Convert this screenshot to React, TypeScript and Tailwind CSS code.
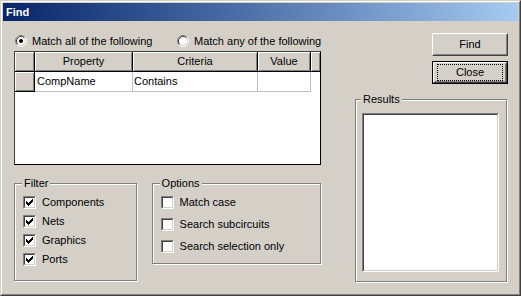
import React from "react";

const raised = "bg-[#d4d0c8] shadow-[inset_1px_1px_0_#fff,inset_-1px_-1px_0_#808080]";
const etched = "border border-[#808080] shadow-[inset_1px_1px_0_#fff,1px_1px_0_#fff]";

const Radio = ({ checked }: { checked?: boolean }) => (
  <svg width="12" height="12" viewBox="0 0 12 12" className="shrink-0">
    <circle cx="6" cy="6" r="4.5" fill="#fff" />
    <path d="M2.11 9.89 A5.5 5.5 0 0 1 9.89 2.11" stroke="#808080" fill="none" />
    <path d="M9.89 2.11 A5.5 5.5 0 0 1 2.11 9.89" stroke="#fff" fill="none" />
    <path d="M2.82 9.18 A4.5 4.5 0 0 1 9.18 2.82" stroke="#404040" fill="none" />
    <path d="M9.18 2.82 A4.5 4.5 0 0 1 2.82 9.18" stroke="#d4d0c8" fill="none" />
    {checked && <circle cx="6" cy="6" r="2" fill="#000" />}
  </svg>
);

const checkTops = [2, 3, 4, 3, 2, 1, 0];

const Checkbox = ({ checked }: { checked?: boolean }) => (
  <div className="w-[13px] h-[13px] shrink-0 border border-t-[#808080] border-l-[#808080] border-r-white border-b-white">
    <div className="w-full h-full border border-t-[#404040] border-l-[#404040] border-r-[#d4d0c8] border-b-[#d4d0c8] bg-white">
      {checked && (
        <svg width="9" height="9" viewBox="0 0 9 9" shapeRendering="crispEdges">
          {checkTops.map((t, i) => (
            <rect key={i} x={1 + i} y={1 + t} width="1" height="3" fill="#000" />
          ))}
        </svg>
      )}
    </div>
  </div>
);

const Button = ({ text, isDefault }: { text: string; isDefault?: boolean }) => (
  <div className={`w-[76px] h-[23px] ${isDefault ? "border border-black" : ""}`}>
    <div className="w-full h-full border border-t-white border-l-white border-r-[#404040] border-b-[#404040]">
      <div className="w-full h-full border border-t-[#d4d0c8] border-l-[#d4d0c8] border-r-[#808080] border-b-[#808080] flex items-center justify-center">
        {isDefault ? (
          <div className="w-full h-full mx-[2px] my-[2px] border border-dotted border-black flex items-center justify-center">
            {text}
          </div>
        ) : (
          text
        )}
      </div>
    </div>
  </div>
);

const Group = ({
  label,
  labelLeft = "left-[7px]",
  className,
  children,
}: {
  label: string;
  labelLeft?: string;
  className: string;
  children: React.ReactNode;
}) => (
  <div className={`relative ${etched} ${className}`}>
    <span className={`absolute -top-[7px] ${labelLeft} px-[2px] bg-[#d4d0c8] leading-[13px]`}>
      {label}
    </span>
    {children}
  </div>
);

export default function App() {
  return (
    <div
      className="w-[521px] h-[296px] bg-[#d4d0c8] text-black text-[11px] leading-[13px] border border-t-[#d4d0c8] border-l-[#d4d0c8] border-r-[#404040] border-b-[#404040]"
      style={{ fontFamily: '"Liberation Sans", Arial, sans-serif' }}
    >
      <div className="w-full h-full border border-t-white border-l-white border-r-[#808080] border-b-[#808080] p-[1px] flex flex-col">
        <div className="h-[18px] shrink-0 bg-linear-to-r from-[#0a246a] to-[#a6caf0] flex items-center pl-[3px]">
          <span className="text-white font-bold">Find</span>
        </div>

        <div className="flex items-start">
          {/* left column */}
          <div className="ml-[11px] w-[307px] flex flex-col">
            <div className="mt-[14px] h-[12px] flex items-center pl-[1px] whitespace-nowrap">
              <div className="w-[162px] shrink-0 flex items-center gap-[5px]">
                <Radio checked />
                <span>Match all of the following</span>
              </div>
              <div className="flex items-center gap-[5px]">
                <Radio />
                <span>Match any of the following</span>
              </div>
            </div>

            <div className="mt-[4px] h-[114px] border border-black border-t-[#404040] border-l-[#404040] bg-white">
              <div className="flex h-[20px]">
                <div className={`w-[20px] border-r border-b border-black ${raised}`} />
                <div className={`w-[98px] border-r border-b border-black ${raised} flex items-center justify-center`}>
                  Property
                </div>
                <div className={`w-[125px] border-r border-b border-black ${raised} flex items-center justify-center`}>
                  Criteria
                </div>
                <div className={`w-[53px] border-r border-b border-black ${raised} flex items-center justify-center`}>
                  Value
                </div>
                <div className={`w-[9px] border-b border-black ${raised}`} />
              </div>
              <div className="flex h-[20px]">
                <div className={`w-[20px] border-r border-b border-black ${raised}`} />
                <div className="w-[98px] border-r border-b border-[#c0c0c0] flex items-center pl-[2px]">
                  CompName
                </div>
                <div className="w-[125px] border-r border-b border-[#c0c0c0] flex items-center pl-[1px]">
                  Contains
                </div>
                <div className="w-[53px] border-r border-b border-[#c0c0c0]" />
              </div>
            </div>

            <div className="mt-[18px] flex items-start">
              <Group label="Filter" className="w-[123px] h-[98px] mr-[15px] pt-[9px] pl-[8px]">
                {[
                  "Components",
                  "Nets",
                  "Graphics",
                  "Ports",
                ].map((t) => (
                  <div key={t} className="h-[19px] flex items-center gap-[6px]">
                    <Checkbox checked />
                    <span>{t}</span>
                  </div>
                ))}
              </Group>
              <Group label="Options" className="w-[170px] h-[81px] pt-[7px] pl-[8px]">
                {["Match case", "Search subcircuits", "Search selection only"].map((t) => (
                  <div key={t} className="h-[22px] flex items-center gap-[6px]">
                    <Checkbox />
                    <span>{t}</span>
                  </div>
                ))}
              </Group>
            </div>
          </div>

          {/* right column */}
          <div className="ml-[34px] w-[153px] flex flex-col">
            <div className="mt-[12px] self-end">
              <Button text="Find" />
            </div>
            <div className="mt-[5px] self-end">
              <Button text="Close" isDefault />
            </div>
            <Group label="Results" labelLeft="left-[5px]" className="mt-[15px] w-[152px] h-[183px] pt-[13px] pl-[6px]">
              <div className="w-[137px] h-[159px] border border-t-[#808080] border-l-[#808080] border-r-white border-b-white">
                <div className="w-full h-full border border-t-[#404040] border-l-[#404040] border-r-[#d4d0c8] border-b-[#d4d0c8] bg-white" />
              </div>
            </Group>
          </div>
        </div>
      </div>
    </div>
  );
}
